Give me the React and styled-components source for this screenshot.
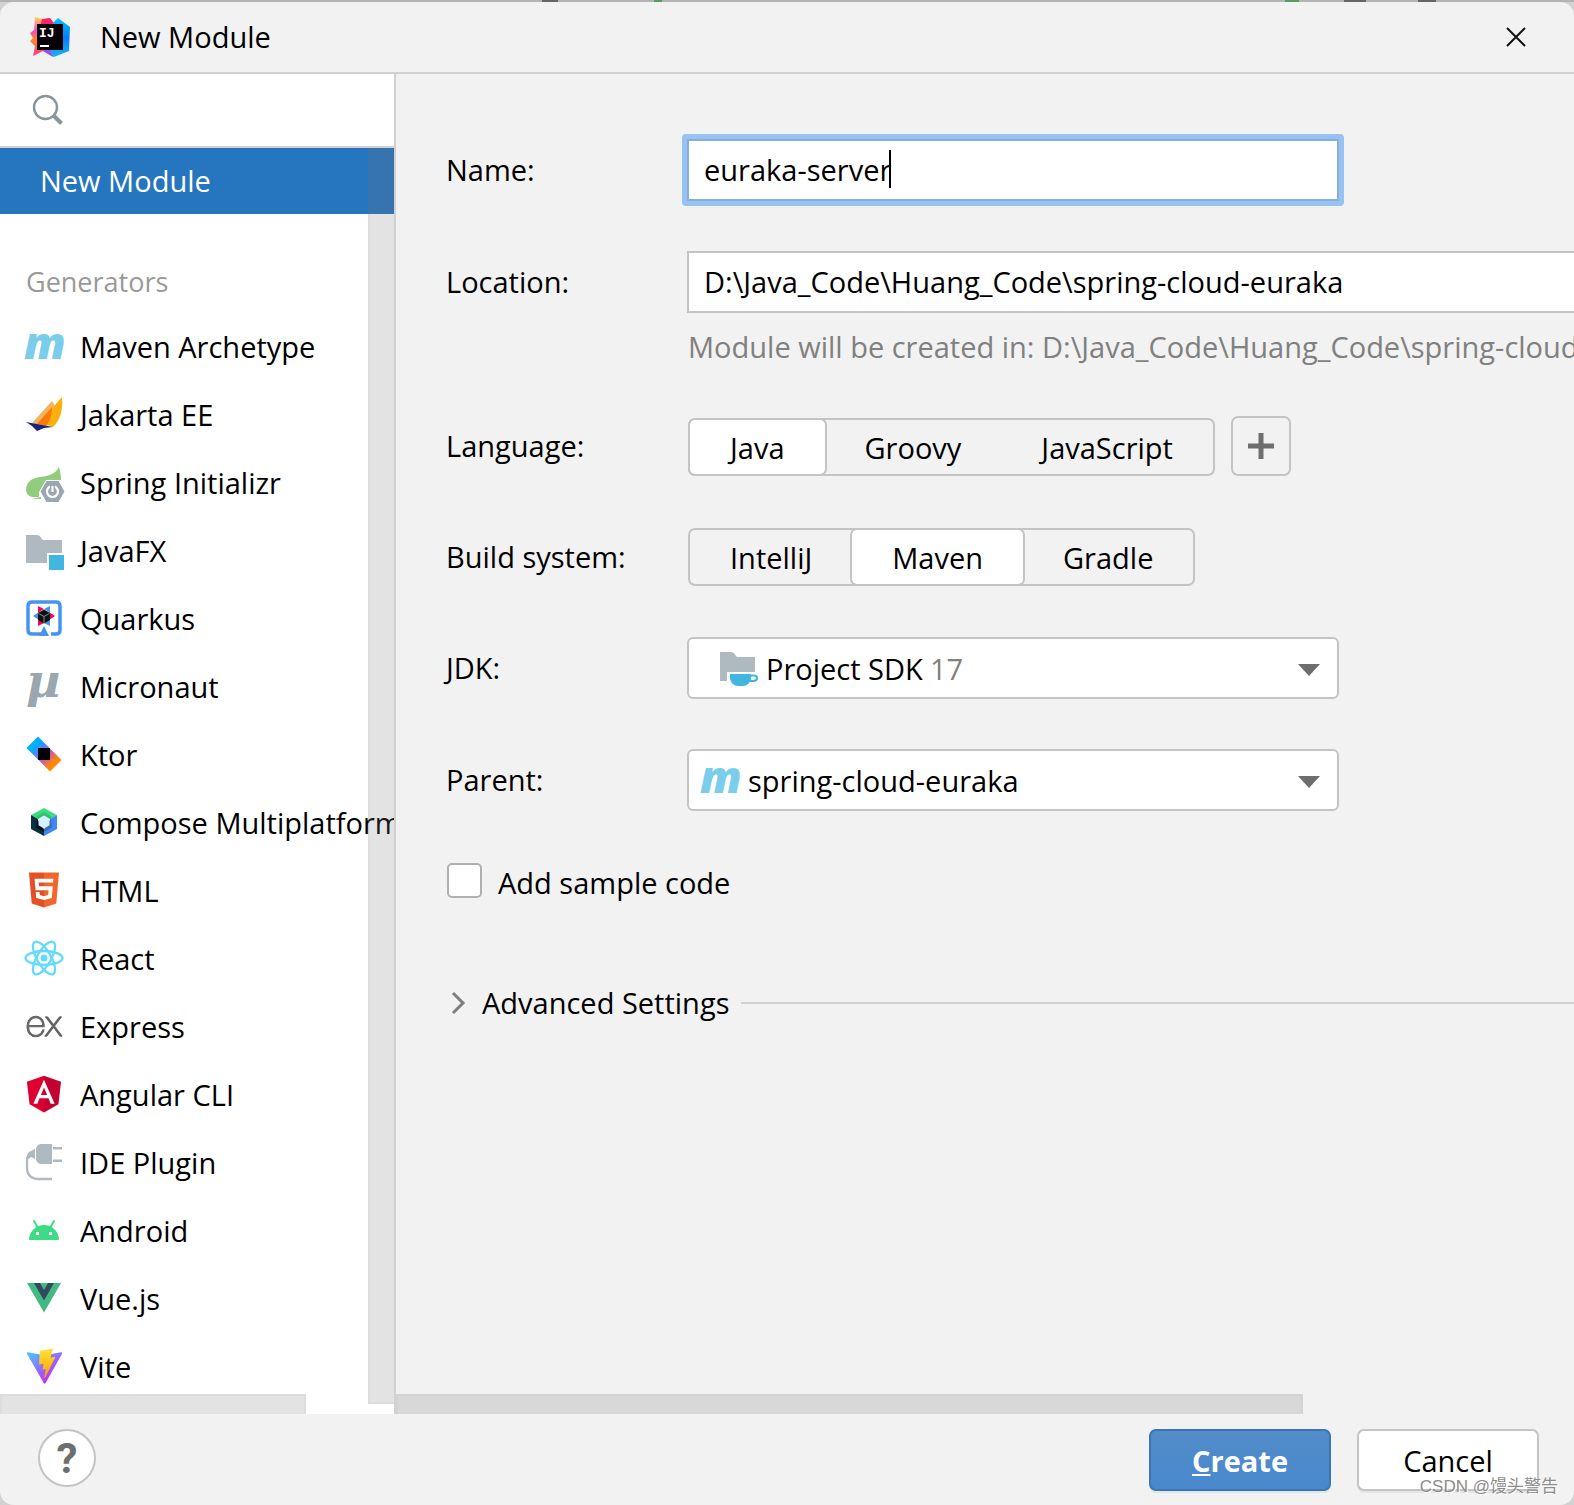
import React, { useState } from 'react';

// Style
import styled, { createGlobalStyle } from 'styled-components';

// Icons
import { FaAngular, FaHtml5 } from 'react-icons/fa';
import { SiExpress } from 'react-icons/si';

const GlobalStyle = createGlobalStyle`
  * {
    box-sizing: border-box;
  }

  body {
    margin: 0;
    background: #d2d2d2;
    color: #000;
    font-family: 'Open Sans', 'Noto Sans', 'Noto Sans CJK SC', sans-serif;
    font-size: 29px;
    line-height: 40px;
  }

  input, select, button {
    color: inherit;
    font: inherit;
  }

  svg {
    overflow: visible;
  }
`;

const MavenIcon = () => (
   <svg width="40" height="40" viewBox="0 0 40 40" aria-hidden="true">
      <text x="0" y="33" fill="#7bcdec" fontFamily="Open Sans" fontSize="45" fontStyle="italic" fontWeight="800">m</text>
   </svg>
);

const JakartaIcon = () => (
   <svg width="40" height="40" viewBox="0 0 40 40" aria-hidden="true">
      <path d="M28 7 8 29l9 2L31 12Z" fill="#f5b35c" />
      <path d="M38 3c1 12-1 22-9 30l-10-3c4-8 10-18 19-27Z" fill="#fdaf0d" />
      <path d="M28 13 13 30l9 2c4-5 6-12 6-19Z" fill="#fd7a04" />
      <path d="m2 28 27 5-9 1-7 3-5-5Z" fill="#1a237e" />
   </svg>
);

const SpringIcon = () => (
   <svg width="40" height="40" viewBox="0 0 40 40" aria-hidden="true">
      <path d="M35 5c1 4 2 8 2 13h-15l-7 12v5H8c-4-1-6-4-6-8 1-8 6-11 14-12 9-1 15-3 19-10ZM8 37l9-2v2Z" fill="#94cc7d" />
      <path d="M22.500 19h12l6 10.500-6 10.500h-12l-6-10.500Z" fill="#9aa7b0" />
      <circle cx="28.500" cy="29.500" r="5.500" fill="none" stroke="#fff" strokeWidth="2.200" />
      <path d="M28.500 23v7" stroke="#9aa7b0" strokeWidth="5" />
      <path d="M28.500 24v6" stroke="#fff" strokeWidth="2.200" />
   </svg>
);

const JavaFxIcon = () => (
   <svg width="40" height="40" viewBox="0 0 40 40" aria-hidden="true">
      <path d="M2 5h11c3 0 4 3 6 5h19v13H23v10H2Z" fill="#aeb9c0" />
      <path d="M25 25h15v15H25Z" fill="#41b6e1" />
   </svg>
);

const QuarkusIcon = () => (
   <svg width="40" height="40" viewBox="0 0 40 40" aria-hidden="true">
      <path d="M17 36H8q-4 0-4-4V8q0-4 4-4h24q4 0 4 4v24q0 4-4 4h-5" fill="none" stroke="#4695eb" strokeWidth="3.500" />
      <path d="m20 28 5 10H15Z" fill="#4695eb" />
      <path d="m14 8 6 3-5 3-1 4Zm17 10-6 4v-8Zm-17 10v-8l6 5Z" fill="#ff004a" />
      <path d="m26 8-6 3 5 3 1 4ZM9 18l6 4v-8Zm17 10v-8l-6 5Z" fill="#4695eb" />
      <path d="m20 11.500 6 3.500v7l-6 3.500-6-3.500v-7Z" fill="#091313" />
      <path d="m14.500 15.500 5.500 3 5.500-3M20 18.500V25" fill="none" stroke="#8a9090" />
   </svg>
);

const MicronautIcon = () => (
   <svg width="40" height="40" viewBox="0 0 40 40" aria-hidden="true">
      <text x="2" y="31" fill="#9aa7b0" fontFamily="DejaVu Serif" fontSize="47" fontStyle="italic" fontWeight="700">µ</text>
   </svg>
);

const KtorIcon = () => (
   <svg width="40" height="40" viewBox="0 0 40 40" aria-hidden="true">
      <defs>
         <linearGradient id="ktor" x1="8" y1="8" x2="32" y2="32" gradientUnits="userSpaceOnUse">
            <stop offset=".15" stopColor="#00afff" />
            <stop offset=".35" stopColor="#5282ff" />
            <stop offset=".6" stopColor="#c757bc" />
            <stop offset=".88" stopColor="#ff8900" />
         </linearGradient>
      </defs>
      <path d="M14 2.500 37.500 26 26 37.500 2.500 14Z" fill="url(#ktor)" />
      <path d="M14 14h12v12H14Z" />
   </svg>
);

const ComposeIcon = () => (
   <svg width="40" height="40" viewBox="0 0 40 40" aria-hidden="true">
      <path d="m20 6 13 7-6 4-7-4-7 4-6-4Z" fill="#3ddc84" />
      <path d="m20 10 7 4v4l-7-4-7 4v-4Z" fill="#37bf6e" />
      <path d="m7 13 6 3.500v8l7 4V34L7 27Z" fill="#083042" />
      <path d="m33 13-6 3.500v8l-7 4V34l13-7Z" fill="#4285f4" />
      <path d="m27 16.500 1 9-8 4.500v-3Z" fill="#3870b2" />
      <path d="m13 16.500-1 9 8 4.500v-3Z" fill="#041619" />
      <path d="m20 13.500 5.500 3.200v6.600L20 26.500l-5.500-3.200v-6.600Z" fill="#d6f0ff" />
   </svg>
);

const HtmlIcon = () => (
   <ShieldBox>
      <svg width="0" height="0" aria-hidden="true">
         <linearGradient id="html">
            <stop offset=".5" stopColor="#e44f26" />
            <stop offset=".5" stopColor="#f1662a" />
         </linearGradient>
      </svg>
      <FaHtml5 size="40" fill="url(#html)" stroke="none" />
   </ShieldBox>
);

const AngularIcon = () => (
   <ShieldBox>
      <svg width="0" height="0" aria-hidden="true">
         <linearGradient id="angular">
            <stop offset=".5" stopColor="#dd0031" />
            <stop offset=".5" stopColor="#c3002f" />
         </linearGradient>
      </svg>
      <FaAngular size="42" fill="url(#angular)" stroke="none" />
   </ShieldBox>
);

const ReactIcon = () => (
   <svg width="40" height="40" viewBox="0 0 40 40" fill="none" stroke="#61dafb" strokeWidth="2.300" aria-hidden="true">
      <ellipse cx="20" cy="20" rx="18.500" ry="7" />
      <ellipse cx="20" cy="20" rx="18.500" ry="7" transform="rotate(60 20 20)" />
      <ellipse cx="20" cy="20" rx="18.500" ry="7" transform="rotate(120 20 20)" />
      <circle cx="20" cy="20" r="3.500" fill="#61dafb" stroke="none" />
   </svg>
);

const ExpressIcon = () => <SiExpress size="35" color="#646464" stroke="#646464" strokeWidth=".7" />;

const PluginIcon = () => (
   <svg width="40" height="40" viewBox="0 0 40 40" aria-hidden="true">
      <path d="M16 2h12v20H16q-4-2-4-5V7q0-3 4-5Z" fill="#aeb9c0" />
      <path d="M29 5h9v2.500h-9Zm0 12.500h9V20h-9Z" fill="#aeb9c0" />
      <path d="M11 7v10l-4-2-4 3c0-6 3-9 8-11Z" fill="#aeb9c0" />
      <path d="M7 10q-4 3-4 9v6q0 12 12 12h13" fill="none" stroke="#aeb9c0" strokeWidth="2.300" />
   </svg>
);

const AndroidIcon = () => (
   <svg width="40" height="40" viewBox="0 0 40 40" aria-hidden="true">
      <path d="M5 30a15 15 0 0 1 30 0Z" fill="#3ddc84" />
      <path d="m10 11 4 7M30 11l-4 7" stroke="#3ddc84" strokeWidth="2" strokeLinecap="round" />
      <path d="M12 22h3v3h-3Zm13 0h3v3h-3Z" fill="#fff" />
   </svg>
);

const VueIcon = () => (
   <svg width="40" height="40" viewBox="0 0 40 40" aria-hidden="true">
      <path d="M3 5h34L20 34.500Z" fill="#42b883" />
      <path d="M10 5h6l4 7 4-7h6L20 22.500Z" fill="#35495e" />
   </svg>
);

const ViteIcon = () => (
   <svg width="37" height="37" viewBox="0 0 410 404" aria-hidden="true">
      <defs>
         <linearGradient id="vite" x1="6" y1="33" x2="235" y2="344" gradientUnits="userSpaceOnUse">
            <stop stopColor="#41d1ff" />
            <stop offset="1" stopColor="#bd34fe" />
         </linearGradient>
         <linearGradient id="bolt" x1="194" y1="9" x2="236" y2="293" gradientUnits="userSpaceOnUse">
            <stop stopColor="#ffea83" />
            <stop offset=".08" stopColor="#ffdd35" />
            <stop offset="1" stopColor="#ffa800" />
         </linearGradient>
      </defs>
      <path d="M399.641 59.525 215.643 388.545c-3.799 6.793-13.559 6.833-17.415.073L10.582 59.556c-4.201-7.366 2.098-16.29 10.446-14.797l184.195 32.923a10 10 0 0 0 3.553-.006l180.343-32.87c8.32-1.517 14.649 7.337 10.522 14.719Z" fill="url(#vite)" />
      <path d="M292.965 1.574 156.801 28.255a5 5 0 0 0-4.03 4.611l-8.376 141.464c-.197 3.332 2.863 5.918 6.115 5.168l37.91-8.749c3.547-.818 6.752 2.306 6.023 5.873l-11.263 55.153c-.758 3.712 2.727 6.886 6.352 5.785l23.415-7.114c3.63-1.102 7.118 2.081 6.35 5.796l-17.899 86.633c-1.12 5.419 6.088 8.374 9.094 3.728l2.008-3.103 110.954-221.428c1.858-3.707-1.346-7.935-5.418-7.149l-39.022 7.531c-3.667.707-6.787-2.708-5.752-6.296l25.469-88.291c1.036-3.594-2.095-7.012-5.766-6.293Z" fill="url(#bolt)" />
   </svg>
);

const SdkIcon = () => (
   <svg width="40" height="40" viewBox="0 0 40 40" aria-hidden="true">
      <path d="M2 4h11c3 0 4 3 6 5h18v15H9v9H2Z" fill="#aeb9c0" />
      <path d="M12 26h21v5q-2 7-8 7h-5q-6 0-8-7Z" fill="#41b6e1" />
      <path d="M32 27.500h4q3 0 3 2.500t-3 3h-5" fill="none" stroke="#41b6e1" strokeWidth="2.200" />
   </svg>
);

const IdeaLogo = () => (
   <svg width="40" height="40" viewBox="0 0 40 40" aria-hidden="true">
      <defs>
         <linearGradient id="warm" x1="0" y1="0" x2="0" y2="1">
            <stop offset="0" stopColor="#fdd94f" />
            <stop offset=".35" stopColor="#f54bc8" />
            <stop offset=".6" stopColor="#ff8a1c" />
            <stop offset="1" stopColor="#ff2fa0" />
         </linearGradient>
         <linearGradient id="cool" x1="0" y1="0" x2="0" y2="1">
            <stop offset="0" stopColor="#00c8f8" />
            <stop offset=".5" stopColor="#0a7cf5" />
            <stop offset="1" stopColor="#19b4f5" />
         </linearGradient>
      </defs>
      <path d="m5 0 8 2 7 6v24l-7 2-10 5 2-10-5-5 3-3-3-5 4-3Z" fill="url(#warm)" />
      <path d="m12 2 8-1 4 5v4H10Z" fill="#fb2566" />
      <path d="m23 6 5-5 12 9-1 24-15 6-11-6 5-6Z" fill="url(#cool)" />
      <path d="m13 34 6-3 4 9Z" fill="#a14bea" />
      <path d="M7 7h26v26H7Z" fill="#0b0208" />
      <path d="M10 28h9v2h-9Z" fill="#fff" />
      <text x="9" y="20" fill="#fff" fontFamily="Liberation Mono" fontSize="13" fontWeight="700">IJ</text>
   </svg>
);

const generators = [
   { name: 'Maven Archetype', Icon: MavenIcon },
   { name: 'Jakarta EE', Icon: JakartaIcon },
   { name: 'Spring Initializr', Icon: SpringIcon },
   { name: 'JavaFX', Icon: JavaFxIcon },
   { name: 'Quarkus', Icon: QuarkusIcon },
   { name: 'Micronaut', Icon: MicronautIcon },
   { name: 'Ktor', Icon: KtorIcon },
   { name: 'Compose Multiplatform', Icon: ComposeIcon },
   { name: 'HTML', Icon: HtmlIcon },
   { name: 'React', Icon: ReactIcon },
   { name: 'Express', Icon: ExpressIcon },
   { name: 'Angular CLI', Icon: AngularIcon },
   { name: 'IDE Plugin', Icon: PluginIcon },
   { name: 'Android', Icon: AndroidIcon },
   { name: 'Vue.js', Icon: VueIcon },
   { name: 'Vite', Icon: ViteIcon },
];

const SegmentedControl = ({ name, label, options, value, onChange }) => (
   <Segments role="radiogroup" aria-label={label}>
      {options.map(option => (
         <Segment key={option} $active={option === value}>
            <input type="radio" name={name} checked={option === value} onChange={() => onChange(option)} />
            {option}
         </Segment>
      ))}
   </Segments>
);

const Arrow = () => (
   <svg width="22" height="12" viewBox="0 0 22 12" aria-hidden="true">
      <path d="M0 0h22L11 12Z" fill="#6e6e6e" />
   </svg>
);

const App = () => {
   const [name, setName] = useState('euraka-server');
   const [location, setLocation] = useState('D:\\Java_Code\\Huang_Code\\spring-cloud-euraka');
   const [language, setLanguage] = useState('Java');
   const [build, setBuild] = useState('Maven');

   return (
      <>
         <GlobalStyle />
         <Backdrop />
         <Dialog>
            <TitleBar>
               <IdeaLogo />
               <Title>New Module</Title>
               <CloseButton aria-label="Close">
                  <svg width="20" height="20" viewBox="0 0 20 20" aria-hidden="true">
                     <path d="m1 1 18 18M19 1 1 19" stroke="#111" strokeWidth="2" />
                  </svg>
               </CloseButton>
            </TitleBar>

            <Content>
               <Sidebar>
                  <Search>
                     <svg width="30" height="30" viewBox="0 0 30 30" fill="none" stroke="#8a949b" aria-hidden="true">
                        <circle cx="12.500" cy="12.500" r="11.500" strokeWidth="2.400" />
                        <path d="m20.500 20.500 8 8" strokeWidth="4" />
                     </svg>
                     <input type="search" aria-label="Search" />
                  </Search>
                  <ListArea>
                     <SelectedItem>New Module</SelectedItem>
                     <GroupTitle>Generators</GroupTitle>
                     <List>
                        {generators.map(({ name: title, Icon }) => (
                           <Item key={title}>
                              <IconBox><Icon /></IconBox>
                              {title}
                           </Item>
                        ))}
                     </List>
                     <VerticalThumb />
                     <HorizontalThumb $width="306px" />
                  </ListArea>
               </Sidebar>

               <Main>
                  <Form>
                     <Row>
                        <Label htmlFor="name">Name:</Label>
                        <FocusRing>
                           <TextInput id="name" $focused value={name} onChange={e => setName(e.target.value)} />
                           <Caret />
                        </FocusRing>
                     </Row>
                     <div>
                        <Row>
                           <Label htmlFor="location">Location:</Label>
                           <TextInput id="location" $open value={location} onChange={e => setLocation(e.target.value)} />
                        </Row>
                        <Hint>Module will be created in: {location}\{name}</Hint>
                     </div>
                     <Row $compact>
                        <Label as="span">Language:</Label>
                        <Controls>
                           <SegmentedControl
                              name="language"
                              label="Language"
                              options={['Java', 'Groovy', 'JavaScript']}
                              value={language}
                              onChange={setLanguage}
                           />
                           <AddButton aria-label="Add language">
                              <svg width="26" height="26" viewBox="0 0 26 26" aria-hidden="true">
                                 <path d="M13 0v26M0 13h26" stroke="#6e6e6e" strokeWidth="5" />
                              </svg>
                           </AddButton>
                        </Controls>
                     </Row>
                     <Row $compact>
                        <Label as="span">Build system:</Label>
                        <Controls>
                           <SegmentedControl
                              name="build"
                              label="Build system"
                              options={['IntelliJ', 'Maven', 'Gradle']}
                              value={build}
                              onChange={setBuild}
                           />
                        </Controls>
                     </Row>
                     <Row>
                        <Label htmlFor="jdk">JDK:</Label>
                        <Combo $start="31px">
                           <Select id="jdk" $indent="77px">
                              <option>Project SDK</option>
                           </Select>
                           <ComboIcon><SdkIcon /></ComboIcon>
                           <Version>17</Version>
                           <ComboArrow><Arrow /></ComboArrow>
                        </Combo>
                     </Row>
                     <Row>
                        <Label htmlFor="parent">Parent:</Label>
                        <Combo $start="13px">
                           <Select id="parent" $indent="59px">
                              <option>spring-cloud-euraka</option>
                           </Select>
                           <ComboIcon><MavenIcon /></ComboIcon>
                           <ComboArrow><Arrow /></ComboArrow>
                        </Combo>
                     </Row>
                     <CheckRow>
                        <Checkbox type="checkbox" />
                        <span>Add sample code</span>
                     </CheckRow>
                     <Advanced>
                        <AdvancedButton type="button" aria-expanded="false">
                           <svg width="15" height="22" viewBox="0 0 15 22" aria-hidden="true">
                              <path d="m2 1 10 10L2 21" fill="none" stroke="#7f7f7f" strokeWidth="3" />
                           </svg>
                           Advanced Settings
                        </AdvancedButton>
                        <Line />
                     </Advanced>
                  </Form>
                  <HorizontalThumb $width="77%" />
               </Main>
            </Content>

            <Footer>
               <HelpButton aria-label="Help">?</HelpButton>
               <Actions>
                  <ActionButton $primary><u>C</u>reate</ActionButton>
                  <ActionButton>Cancel</ActionButton>
               </Actions>
            </Footer>
            <Watermark>CSDN @馒头警告</Watermark>
         </Dialog>
      </>
   );
};

const Backdrop = styled.div`
  height: 2px;
  background:
    linear-gradient(#666, #666) 542px 0 / 16px 2px no-repeat,
    linear-gradient(#5a9a62, #5a9a62) 654px 0 / 8px 2px no-repeat,
    linear-gradient(#5a9a62, #5a9a62) 1285px 0 / 14px 2px no-repeat,
    linear-gradient(#666, #666) 1344px 0 / 22px 2px no-repeat,
    linear-gradient(#666, #666) 1418px 0 / 18px 2px no-repeat,
    #b3b3b3;
`;

const Dialog = styled.div`
  position: relative;
  display: flex;
  flex-direction: column;
  min-height: calc(100vh - 2px);
  background: #f2f2f2;
  border-radius: 14px;
  overflow: hidden;
`;

const TitleBar = styled.header`
  display: flex;
  align-items: center;
  height: 72px;
  padding: 0 48px 0 30px;
  border-bottom: 2px solid #d1d1d1;
`;

const Title = styled.h1`
  flex: 1;
  margin: 0 0 0 30px;
  font-size: 29px;
  font-weight: 400;
`;

const CloseButton = styled.button`
  display: flex;
  padding: 0;
  border: 0;
  background: none;
`;

const Content = styled.div`
  flex: 1;
  display: flex;
`;

const Sidebar = styled.aside`
  flex: none;
  display: flex;
  flex-direction: column;
  width: 396px;
  border-right: 2px solid #d1d1d1;
  background: #fff;
`;

const Search = styled.div`
  display: flex;
  align-items: center;
  gap: 12px;
  height: 74px;
  padding: 0 33px;
  border-bottom: 2px solid #d1d1d1;

  input {
    flex: 1;
    min-width: 0;
    border: 0;
    outline: 0;
    background: none;
  }
`;

const ListArea = styled.div`
  position: relative;
  flex: 1;
  overflow: hidden;
`;

const SelectedItem = styled.div`
  height: 66px;
  padding-left: 40px;
  background: #2675bf;
  color: #fff;
  line-height: 66px;
`;

const GroupTitle = styled.h2`
  margin: 0;
  padding: 36px 0 0 26px;
  height: 99px;
  color: #999;
  font-size: 27px;
  font-weight: 400;
  line-height: 64px;
`;

const List = styled.ul`
  margin: 0;
  padding: 0 0 13px;
  list-style: none;
`;

const Item = styled.li`
  display: flex;
  align-items: center;
  gap: 16px;
  height: 68px;
  padding-left: 24px;
  white-space: nowrap;
`;

const IconBox = styled.span`
  flex: none;
  display: flex;
  align-items: center;
  justify-content: center;
  width: 40px;
  height: 40px;
  margin-bottom: 2px;
`;

// White underlay that shows through the cut-out sign of the shield
const ShieldBox = styled.span`
  display: flex;
  background: linear-gradient(#fff, #fff) center / 20px 24px no-repeat;
`;

const Thumb = styled.div`
  position: absolute;
  border: 2px solid rgba(115, 115, 115, 0.05);
  background: rgba(115, 115, 115, 0.2);
`;

const VerticalThumb = styled(Thumb)`
  top: 0;
  right: 0;
  bottom: 10px;
  width: 26px;
  border-right: 0;
`;

const HorizontalThumb = styled(Thumb)`
  left: 0;
  bottom: 0;
  width: ${props => props.$width};
  height: 20px;
  border-bottom: 0;
`;

const Main = styled.main`
  position: relative;
  flex: 1;
  min-width: 0;
  overflow: hidden;
`;

const Form = styled.form`
  display: flex;
  flex-direction: column;
  gap: 50px;
  padding: 65px 0 40px 50px;
`;

const Row = styled.div`
  display: grid;
  grid-template-columns: 241px minmax(0, 1fr);
  align-items: center;
  height: ${props => (props.$compact ? '61px' : '62px')};
`;

const Label = styled.label`
  white-space: nowrap;
`;

const FocusRing = styled.div`
  position: relative;
  max-width: 662px;
  margin: -5px;
  padding: 5px;
  border-radius: 4px;
  background: #97c3f3;
`;

const TextInput = styled.input`
  display: block;
  width: 100%;
  height: 62px;
  padding: 0 15px 2px;
  border: 2px solid ${props => (props.$focused ? '#87afda' : '#c4c4c4')};
  border-right-width: ${props => (props.$open ? 0 : '2px')};
  border-radius: 0;
  outline: none;
  background: #fff;
`;

const Caret = styled.span`
  position: absolute;
  top: 16px;
  left: 207px;
  width: 2px;
  height: 38px;
  background: #000;
`;

const Hint = styled.p`
  margin: 0;
  padding: 14px 0 0 242px;
  height: 52px;
  color: #808080;
  line-height: 40px;
  white-space: nowrap;
`;

const Controls = styled.div`
  display: flex;
  align-items: flex-end;
  gap: 16px;
`;

const Segments = styled.div`
  display: flex;
  height: 58px;
  margin-left: 1px;
  border: 2px solid #c4c4c4;
  border-radius: 7px;
`;

const Segment = styled.label`
  position: relative;
  padding: 0 40px;
  border-radius: 5px;
  background: ${props => (props.$active ? '#fff' : 'none')};
  box-shadow: ${props => (props.$active ? '0 0 0 2px #c4c4c4' : 'none')};
  line-height: 55px;

  input {
    position: absolute;
    inset: 0;
    margin: 0;
    opacity: 0;
  }
`;

const AddButton = styled.button`
  display: flex;
  align-items: center;
  justify-content: center;
  width: 60px;
  height: 60px;
  padding: 0;
  border: 2px solid #c4c4c4;
  border-radius: 7px;
  background: none;
`;

const Combo = styled.div`
  display: grid;
  grid-template-columns: ${props => props.$start} 212px 1fr 41px;
  align-items: center;
  max-width: 652px;
`;

const Select = styled.select`
  grid-area: 1 / 1 / 2 / -1;
  height: 62px;
  padding: 2px 50px 0 ${props => props.$indent};
  border: 2px solid #c4c4c4;
  border-radius: 6px;
  appearance: none;
  background: #fff;
`;

const ComboIcon = styled.span`
  grid-area: 1 / 2;
  display: flex;
  pointer-events: none;
`;

const Version = styled.span`
  grid-area: 1 / 3;
  padding-top: 2px;
  color: #808080;
  pointer-events: none;
`;

const ComboArrow = styled.span`
  grid-area: 1 / 4;
  display: flex;
  padding-top: 3px;
  pointer-events: none;
`;

const CheckRow = styled.label`
  display: flex;
  align-items: center;
  gap: 16px;
  height: 38px;

  span {
    padding-top: 6px;
  }
`;

const Checkbox = styled.input`
  width: 35px;
  height: 35px;
  margin: 0 0 0 1px;
  border: 2px solid #b0b0b0;
  border-radius: 5px;
  appearance: none;
  background: #fff;
`;

const Advanced = styled.div`
  display: flex;
  align-items: center;
  gap: 12px;
  margin-top: 32px;
`;

const AdvancedButton = styled.button`
  display: flex;
  align-items: center;
  gap: 16px;
  padding: 0 0 0 5px;
  border: 0;
  background: none;
  line-height: 44px;
`;

const Line = styled.span`
  flex: 1;
  height: 2px;
  background: #d1d1d1;
`;

const Footer = styled.footer`
  display: flex;
  align-items: flex-start;
  justify-content: space-between;
  height: 91px;
  padding: 15px 35px 0 38px;
`;

const HelpButton = styled.button`
  width: 58px;
  height: 58px;
  padding: 0;
  border: 2px solid #c4c4c4;
  border-radius: 50%;
  background: #fff;
  color: #6e6e6e;
  font-family: Roboto, sans-serif;
  font-size: 42px;
  font-weight: 700;
  line-height: 56px;
`;

const Actions = styled.div`
  display: flex;
  gap: 26px;
`;

const ActionButton = styled.button`
  width: 182px;
  height: 62px;
  padding: 2px 0 0;
  border: 2px solid ${props => (props.$primary ? '#3b75b5' : '#c4c4c4')};
  border-radius: 7px;
  background: ${props => (props.$primary ? 'linear-gradient(#528cc9, #4989cc)' : '#fff')};
  box-shadow: 0 2px 0 #e4e4e4;
  color: ${props => (props.$primary ? '#fff' : '#000')};
  font-weight: ${props => (props.$primary ? 700 : 400)};
`;

const Watermark = styled.span`
  position: absolute;
  right: 16px;
  bottom: 6px;
  color: #8c8c8c;
  font-family: 'Liberation Sans', 'Noto Sans CJK SC', sans-serif;
  font-size: 17px;
  line-height: 24px;
  text-shadow: 1px 1px 0 #fff;
`;

export default App;
